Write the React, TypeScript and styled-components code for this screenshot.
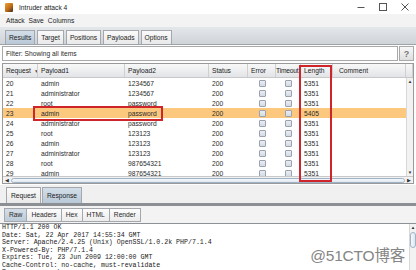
import React from "react";
import styled, { createGlobalStyle } from "styled-components";

const Global = createGlobalStyle`
  html, body { margin: 0; padding: 0; background: #f0f0f0; }
  body { width: 416px; height: 270px; overflow: hidden; font-family: "Liberation Sans", Arial, sans-serif; }
  * { box-sizing: border-box; }
`;

const Window = styled.div`
  width: 416px;
  height: 270px;
  display: flex;
  flex-direction: column;
  background: #f0f0f0;
  color: #2a2a2a;
  font-size: 6.7px;
  overflow: hidden;
`;

const TitleBar = styled.div`
  height: 14px;
  flex: none;
  background: #fff;
  display: flex;
  align-items: center;
  padding-left: 5px;
  gap: 6px;
  font-size: 6.7px;
`;

const AppIcon = styled.div`
  width: 8px;
  height: 9px;
  background: linear-gradient(135deg, #f0a22e 0%, #c06a1a 55%, #3a2a1a 100%);
  border-radius: 1px;
`;

const TitleText = styled.span`
  flex: 1;
  color: #222;
`;

const Controls = styled.div`
  display: flex;
  align-items: center;
  height: 14px;
`;

const Ctrl = styled.div`
  width: 22px;
  height: 14px;
  display: flex;
  align-items: center;
  justify-content: center;
`;

const MenuBar = styled.div`
  height: 13px;
  flex: none;
  display: flex;
  align-items: center;
  padding-left: 6px;
  gap: 4px;
  background: #f3f3f3;
  color: #222;
`;

const TabStrip = styled.div`
  height: 18px;
  flex: none;
  display: flex;
  align-items: flex-end;
  gap: 2px;
  padding-left: 5px;
  background: linear-gradient(#e4e7ea, #cfd4d9);
  border-bottom: 1px solid #9ea3a8;
`;

const Tab = styled.div<{ $active?: boolean }>`
  height: 14px;
  padding: 0 3px;
  display: flex;
  align-items: center;
  border: 1px solid #a4a8ad;
  border-bottom: none;
  background: ${(p) =>
    p.$active ? "linear-gradient(#d3dee9, #b9c8d7)" : "linear-gradient(#fafafa, #e9e9e9)"};
  color: #222;
`;

const ResultsPanel = styled.div`
  flex: none;
  height: 140px;
  background: #fdfdfd;
  display: flex;
  flex-direction: column;
  padding: 1px 2px 0 2px;
  gap: 2px;
`;

const FilterRow = styled.div`
  height: 15px;
  display: flex;
  gap: 1px;
`;

const FilterField = styled.div`
  flex: 1;
  border: 1px solid #a9a9a9;
  background: #fff;
  display: flex;
  align-items: center;
  padding-left: 3px;
`;

const HelpBtn = styled.div`
  width: 15px;
  border: 1px solid #a9a9a9;
  background: linear-gradient(#f8f8f8, #dedede);
  display: flex;
  align-items: center;
  justify-content: center;
  color: #777;
  font-size: 9px;
  font-weight: bold;
`;

const TableWrap = styled.div`
  position: relative;
  height: 121px;
  border: 1px solid #9a9a9a;
  background: #fff;
  display: flex;
  flex-direction: column;
  overflow: hidden;
`;

const cols = "35px 87px 84px 39px 28px 25px 32px 1fr";

const HeaderRow = styled.div`
  height: 14px;
  flex: none;
  display: grid;
  grid-template-columns: ${cols} 7px;
  background: linear-gradient(#f8f8f8, #e2e4e7);
  border-bottom: 1px solid #c8c8c8;
`;

const HeadCell = styled.div<{ $pad?: number; $tight?: boolean }>`
  display: flex;
  align-items: center;
  gap: 3px;
  padding-left: ${(p) => p.$pad ?? 3}px;
  border-right: 1px solid #cfcfcf;
  color: #222;
  white-space: nowrap;
  overflow: hidden;
  letter-spacing: ${(p) => (p.$tight ? "-0.2px" : "normal")};
`;

const SortMark = styled.span`
  font-size: 5px;
  color: #555;
`;

const BodyArea = styled.div`
  flex: 1;
  display: flex;
  min-height: 0;
`;

const Rows = styled.div`
  flex: 1;
  overflow: hidden;
`;

const Row = styled.div<{ $hl?: boolean }>`
  height: 10px;
  display: grid;
  grid-template-columns: ${cols};
  background: ${(p) => (p.$hl ? "#fbc87e" : "#fff")};
`;

const Cell = styled.div<{ $pad?: number; $center?: boolean }>`
  display: flex;
  align-items: center;
  justify-content: ${(p) => (p.$center ? "center" : "flex-start")};
  padding-left: ${(p) => p.$pad ?? 3}px;
  white-space: nowrap;
  overflow: hidden;
  color: #2a2a2a;
`;

const Check = styled.div`
  width: 7px;
  height: 7px;
  border: 1px solid #9aa3ad;
  background: linear-gradient(#eaeef3, #d3dbe3);
  border-radius: 1px;
`;

const VScroll = styled.div`
  width: 7px;
  flex: none;
  background: #f2f2f2;
  border-left: 1px solid #d8d8d8;
  display: flex;
  flex-direction: column;
  align-items: center;
  gap: 2px;
  font-size: 4.5px;
  color: #333;
  padding: 1px 0;
`;

const VGrow = styled.div`
  flex: 1;
`;

const VThumb = styled.div`
  width: 6px;
  height: 16px;
  border: 1px solid #9fb3c8;
  border-radius: 3px;
  background: linear-gradient(90deg, #f6f9fc, #dde6ef);
`;

const HScroll = styled.div`
  height: 7px;
  flex: none;
  background: #f2f2f2;
  border-top: 1px solid #c8c8c8;
  display: flex;
  align-items: center;
  padding: 0 2px;
  gap: 2px;
  font-size: 4.5px;
  color: #333;
`;

const Thumb = styled.div`
  flex: 1;
  height: 5px;
  border: 1px solid #9fb3c8;
  border-radius: 3px;
  background: linear-gradient(#f6f9fc, #dde6ef);
`;

const RedBox = styled.div`
  position: absolute;
  border: 2px solid #d0242b;
  pointer-events: none;
`;

const Spacer = styled.div`
  height: 3px;
  flex: none;
  background: #f0f0f0;
`;

const BottomTabs = styled.div`
  height: 18px;
  flex: none;
  display: flex;
  align-items: flex-end;
  gap: 1px;
  padding-left: 6px;
  background: #f0f0f0;
  border-bottom: 3px solid #8c8f93;
`;

const BigTab = styled(Tab)`
  height: 16px;
  padding: 0 4px;
`;

const SubTabs = styled.div`
  height: 18px;
  flex: none;
  display: flex;
  align-items: center;
  padding-left: 4px;
  background: #f3f3f3;
  border-bottom: 1px solid #8e9297;
`;

const SubTab = styled.div<{ $active?: boolean }>`
  height: 14px;
  padding: 0 4px;
  display: flex;
  align-items: center;
  border: 1px solid #a4a8ad;
  margin-right: -1px;
  background: ${(p) =>
    p.$active ? "linear-gradient(#d4dee8, #bccbd9)" : "linear-gradient(#fcfcfc, #ececec)"};
`;

const Response = styled.div`
  position: relative;
  flex: 1;
  display: flex;
  background: #fff;
  min-height: 0;
`;

const Pre = styled.pre`
  flex: 1;
  margin: 0;
  padding: 0 0 0 2px;
  font-family: "Liberation Mono", "Courier New", monospace;
  font-size: 6.6px;
  line-height: 7.5px;
  color: #222;
  overflow: hidden;
  white-space: pre;
`;

const Watermark = styled.div`
  position: absolute;
  right: 11px;
  top: 19px;
  font-family: "Liberation Sans", "Noto Sans CJK SC", sans-serif;
  font-size: 15.5px;
  color: #858585;
  letter-spacing: -0.2px;
`;

const data: [string, string, string, string][] = [
  ["20", "admin", "1234567", "5351"],
  ["21", "administrator", "1234567", "5351"],
  ["22", "root", "password", "5351"],
  ["23", "admin", "password", "5405"],
  ["24", "administrator", "password", "5351"],
  ["25", "root", "123123", "5351"],
  ["26", "admin", "123123", "5351"],
  ["27", "administrator", "123123", "5351"],
  ["28", "root", "987654321", "5351"],
  ["29", "admin", "987654321", "5351"],
];

const responseText = `HTTP/1.1 200 OK
Date: Sat, 22 Apr 2017 14:55:34 GMT
Server: Apache/2.4.25 (Unix) OpenSSL/1.0.2k PHP/7.1.4
X-Powered-By: PHP/7.1.4
Expires: Tue, 23 Jun 2009 12:00:00 GMT
Cache-Control: no-cache, must-revalidate
Pragma: no-cache`;

export default function App() {
  return (
    <>
      <Global />
      <Window>
        <TitleBar>
          <AppIcon />
          <TitleText>Intruder attack 4</TitleText>
          <Controls>
            <Ctrl>
              <svg width="8" height="8" viewBox="0 0 8 8"><path d="M0.5 4.5h7" stroke="#555" strokeWidth="1" /></svg>
            </Ctrl>
            <Ctrl>
              <svg width="8" height="8" viewBox="0 0 8 8"><rect x="0.5" y="0.5" width="7" height="7" fill="none" stroke="#555" strokeWidth="1" /></svg>
            </Ctrl>
            <Ctrl>
              <svg width="8" height="8" viewBox="0 0 8 8"><path d="M0.5 0.5l7 7M7.5 0.5l-7 7" stroke="#555" strokeWidth="1" /></svg>
            </Ctrl>
          </Controls>
        </TitleBar>
        <MenuBar>
          <span>Attack</span>
          <span>Save</span>
          <span>Columns</span>
        </MenuBar>
        <TabStrip>
          <Tab $active>Results</Tab>
          <Tab>Target</Tab>
          <Tab>Positions</Tab>
          <Tab>Payloads</Tab>
          <Tab>Options</Tab>
        </TabStrip>
        <ResultsPanel>
          <FilterRow>
            <FilterField>Filter: Showing all items</FilterField>
            <HelpBtn>?</HelpBtn>
          </FilterRow>
          <TableWrap>
            <HeaderRow>
              <HeadCell>Request<SortMark>▼</SortMark></HeadCell>
              <HeadCell>Payload1</HeadCell>
              <HeadCell>Payload2</HeadCell>
              <HeadCell>Status</HeadCell>
              <HeadCell>Error</HeadCell>
              <HeadCell $pad={0} $tight>Timeout</HeadCell>
              <HeadCell>Length</HeadCell>
              <HeadCell $pad={6}>Comment</HeadCell>
              <HeadCell />
            </HeaderRow>
            <BodyArea>
              <Rows>
                {data.map(([n, p1, p2, len]) => (
                  <Row key={n} $hl={n === "23"}>
                    <Cell>{n}</Cell>
                    <Cell>{p1}</Cell>
                    <Cell>{p2}</Cell>
                    <Cell>200</Cell>
                    <Cell $center $pad={0}><Check /></Cell>
                    <Cell $center $pad={0}><Check /></Cell>
                    <Cell>{len}</Cell>
                    <Cell />
                  </Row>
                ))}
              </Rows>
              <VScroll>
                <span>▲</span>
                <VGrow />
                <span>▼</span>
              </VScroll>
            </BodyArea>
            <HScroll>
              <span>◀</span>
              <Thumb />
              <span>▶</span>
            </HScroll>
            <RedBox style={{ left: 296, top: 1, width: 33, height: 117 }} />
            <RedBox style={{ left: 30, top: 42, width: 130, height: 15 }} />
          </TableWrap>
        </ResultsPanel>
        <Spacer />
        <BottomTabs>
          <BigTab>Request</BigTab>
          <BigTab $active>Response</BigTab>
        </BottomTabs>
        <SubTabs>
          <SubTab $active>Raw</SubTab>
          <SubTab>Headers</SubTab>
          <SubTab>Hex</SubTab>
          <SubTab>HTML</SubTab>
          <SubTab>Render</SubTab>
        </SubTabs>
        <Response>
          <Pre>{responseText}</Pre>
          <VScroll>
            <span>▲</span>
            <VThumb />
            <VGrow />
          </VScroll>
          <Watermark>@51CTO博客</Watermark>
        </Response>
      </Window>
    </>
  );
}
